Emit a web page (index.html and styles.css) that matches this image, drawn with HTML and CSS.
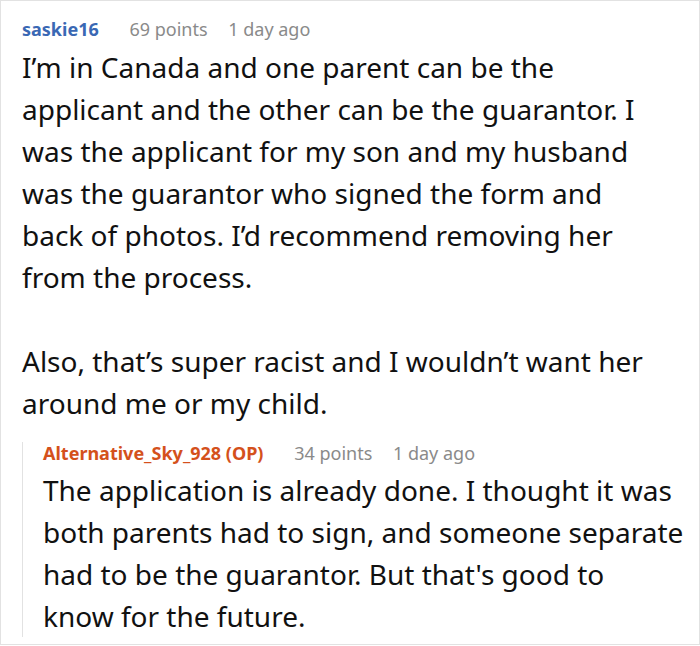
FILE: index.html
```html
<!DOCTYPE html>
<html lang="en">
<head>
<meta charset="utf-8">
<link rel="stylesheet" href="styles.css">
</head>
<body>
<div class="frame">
  <div class="comment">
    <div class="meta">
      <span class="author">saskie16</span>
      <span class="points">69 points</span>
      <span class="time">1 day ago</span>
    </div>
    <div class="body main">
      <p>I’m in Canada and one parent can be the applicant and the other can be the guarantor. I was the applicant for my son and my husband was the guarantor who signed the form and back of photos. I’d recommend removing her from the process.</p>
      <p>Also, that’s super racist and I wouldn’t want her around me or my child.</p>
    </div>
    <div class="reply">
      <div class="meta">
        <span class="author op">Alternative_Sky_928 (OP)</span>
        <span class="points">34 points</span>
        <span class="time">1 day ago</span>
      </div>
      <div class="body">
        <p>The application is already done. I thought it was both parents had to sign, and someone separate had to be the guarantor. But that's good to know&nbsp;for the future.</p>
      </div>
    </div>
  </div>
</div>
</body>
</html>
```

FILE: styles.css
```css
html, body {
  margin: 0;
  padding: 0;
  background: #ffffff;
}

.frame {
  box-sizing: border-box;
  width: 700px;
  height: 645px;
  border: 1px solid #e2e2e2;
  padding: 17px 13px 0 21px;
  font-family: "Noto Sans", "Open Sans", sans-serif;
  color: #111111;
}

.meta {
  font-size: 18px;
  line-height: 22px;
  white-space: nowrap;
}

.author {
  font-weight: 700;
  color: #3a68b4;
  margin-right: 26px;
}

.author.op {
  color: #d4511c;
}

.points {
  color: #8a8a8a;
  margin-right: 16px;
}

.time {
  color: #8a8a8a;
}

.body {
  margin-top: 6px;
  font-size: 28px;
  line-height: 42px;
}

.body.main {
  padding-right: 26px;
}

.body p {
  margin: 0;
}

.body p + p {
  margin-top: 42px;
}

.reply {
  margin-top: 28px;
  border-left: 1px solid #e2e2e2;
  padding-left: 20px;
}

.reply .meta {
  margin-top: -10px;
}

.reply .body {
  margin-top: 5px;
  margin-bottom: -9px;
}
```
